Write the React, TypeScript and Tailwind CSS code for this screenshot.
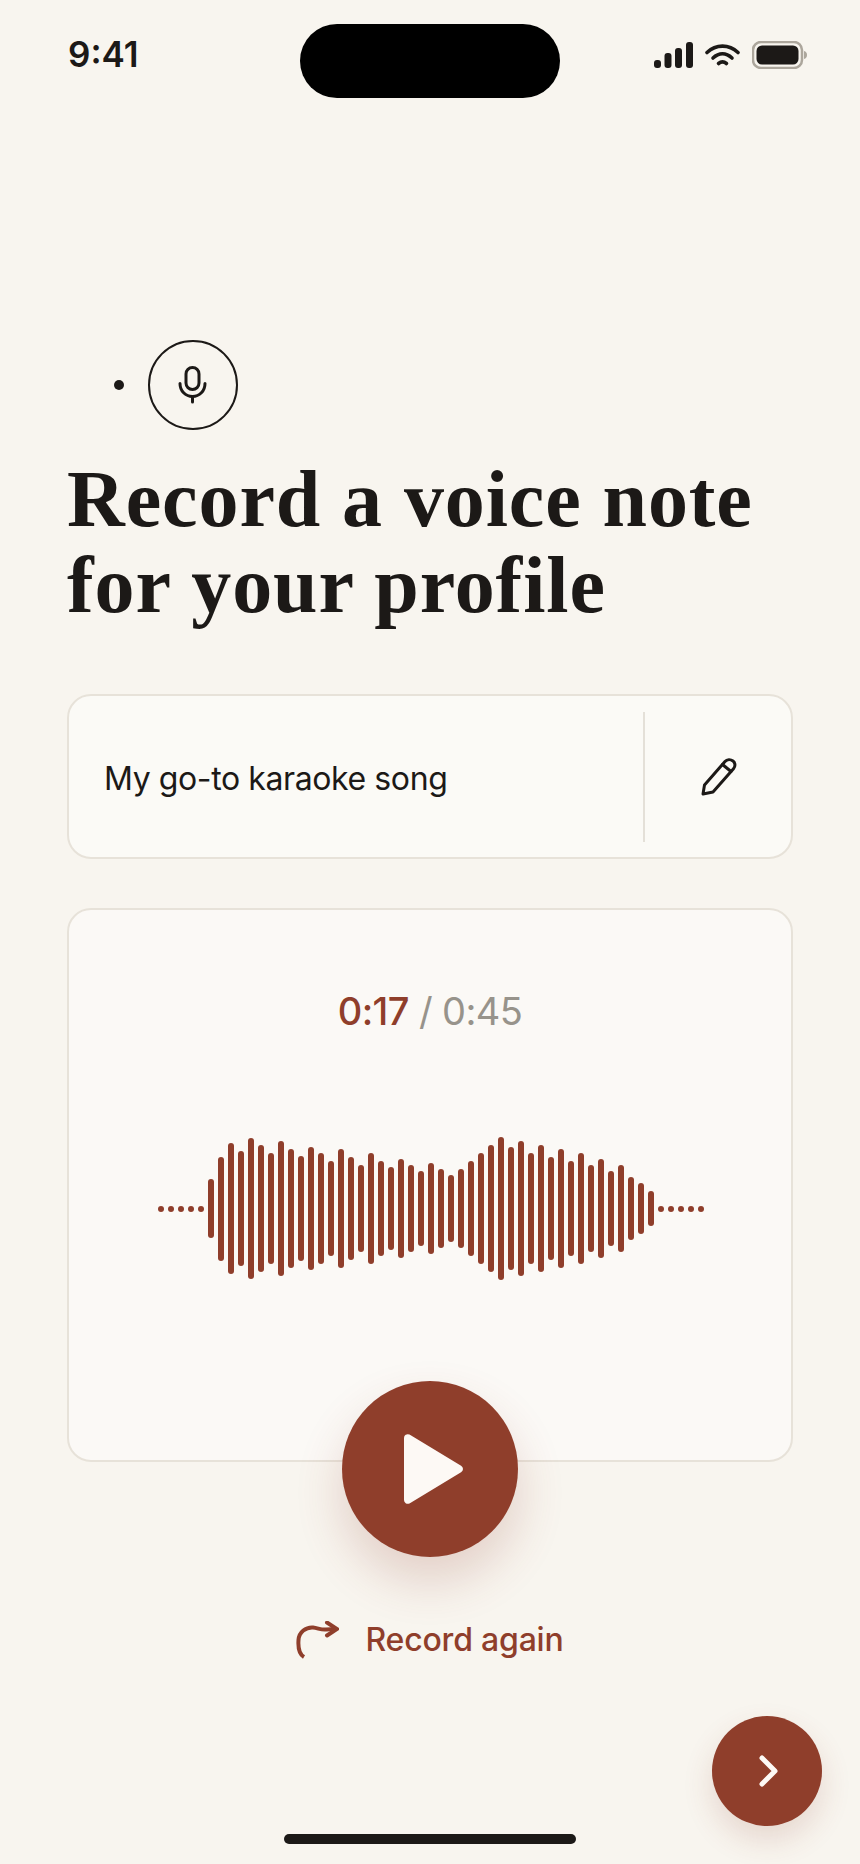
const left = [59,104,131,115,141,127,111,135,119,105,123,111,95,119,103,87,111,95,83,99,87,75,91,79,67,79,95,111,127,143,123,135,111,127,103,119,95,111,87,99,75,87,63,51,35];

function Dots() {
  return (
    <div className="flex gap-1">
      {[0, 1, 2, 3, 4].map((i) => (
        <span key={i} className="h-1.5 w-1.5 rounded-full bg-[#8f3e2b]" />
      ))}
    </div>
  );
}

export default function App() {
  return (
    <div className="relative flex h-[1864px] w-[860px] flex-col overflow-hidden bg-[#f8f5ef] font-['Inter',sans-serif] text-[#1c1917]">
      <header className="grid grid-cols-[300px_260px_1fr] pt-6">
        <div className="pl-[68px] pt-[7px] text-[35px] font-semibold leading-[46px]">9:41</div>
        <div className="h-[74px] rounded-[37px] bg-black" />
        <div className="flex items-start gap-[12px] pl-[94px] pt-4">
          <svg width="39" height="28" viewBox="0 0 39 28" fill="#1c1917" className="mt-[2px]">
            <rect x="0" y="18" width="7" height="8" rx="3" />
            <rect x="10.5" y="11" width="7" height="15" rx="3" />
            <rect x="21" y="6" width="7" height="20" rx="3" />
            <rect x="32" y="0" width="7" height="26" rx="3" />
          </svg>
          <svg width="35" height="24" viewBox="0 0 35 24" fill="none" stroke="#1c1917" strokeWidth="3.6" strokeLinecap="round" className="mt-[3px]">
            <path d="M2 9.5C11 1 24 1 33 9.5" />
            <path d="M8 15C14 9.5 21 9.5 27 15" />
            <path d="M13.5 20.5C16 18.5 19 18.5 21.5 20.5" />
          </svg>
          <svg width="55" height="28" viewBox="0 0 55 28" fill="none" className="mt-[1px]">
            <rect x="1" y="1" width="49" height="26" rx="8" stroke="#aca69c" strokeWidth="2.5" />
            <rect x="4.5" y="4.5" width="42" height="19" rx="5.5" fill="#1c1917" />
            <path d="M52 10C54 10.5 55 12 55 14C55 16 54 17.5 52 18Z" fill="#aca69c" />
          </svg>
        </div>
      </header>

      <main className="flex flex-1 flex-col px-[67px] pt-[242px]">
        <div className="flex items-center gap-6 pl-[47px]">
          <span className="h-2.5 w-2.5 rounded-full bg-[#1c1917]" />
          <div className="flex h-[90px] w-[90px] items-center justify-center rounded-full border-2 border-[#1c1917]">
            <svg width="30" height="38" viewBox="0 0 30 38" fill="none" stroke="#1c1917" strokeWidth="3" strokeLinecap="round">
              <rect x="8" y="1.5" width="13" height="22" rx="6.5" />
              <path d="M2 17.5C2 25 7.500 30.500 14.500 30.500C21.500 30.500 27 25 27 17.500" />
              <path d="M14.500 31V36" />
            </svg>
          </div>
        </div>

        <h1 className="mt-[26px] font-['Liberation_Serif',serif] text-[80px] font-bold leading-[86px] tracking-[0.9px] text-[#1c1917]">
          Record a voice note
          <br />
          for your profile
        </h1>

        <section className="mt-[66px] flex h-[165px] items-center rounded-[24px] border-2 border-[#e7e2d9] bg-[#fbfaf6] pl-[35px] pr-0">
          <span className="flex-1 pt-1 text-[32px] leading-10 tracking-[-0.4px]">My go-to karaoke song</span>
          <div className="flex h-[130px] w-[148px] items-center justify-center border-l-2 border-[#e4e0d8]">
            <svg width="36" height="38" viewBox="0 0 36 38" fill="none" stroke="#1c1917" strokeWidth="3" strokeLinejoin="round" strokeLinecap="round" className="mr-[-1px]">
              <path d="M2 36L3.500 27L24 3.500C26 1.200 29.500 1 32 3C34.500 5 34.500 8.500 32.500 10.800L12 34L2 36Z" />
              <path d="M21.500 6.500L30 13.500" />
            </svg>
          </div>
        </section>

        <section className="mt-[49px] flex h-[554px] flex-col items-center rounded-[24px] border-2 border-[#e7e2d9] bg-[#fbf9f6] pt-[76px]">
          <div className="text-[38px] leading-[50px] tracking-[-0.6px]">
            <span className="font-medium text-[#8f3e2b]">0:17</span>
            <span className="text-[#97938b]"> / 0:45</span>
          </div>
          <div className="ml-[2px] mt-[101px] flex items-center gap-1">
            <Dots />
            {left.map((h, i) => (
              <span key={i} className="w-1.5 rounded-full bg-[#8f3e2b]" style={{ height: h }} />
            ))}
            <Dots />
          </div>
        </section>

        <div className="relative z-10 -mt-[81px] flex justify-center">
          <button className="flex h-[176px] w-[176px] items-center justify-center rounded-full bg-[#8f3e2b] shadow-[0_24px_48px_rgba(143,62,43,0.2)]">
            <svg width="62" height="72" viewBox="0 0 62 72" className="ml-[6px]">
              <path d="M3 5L3 67C3 69 5 70.500 7 69.500L58.500 38.500C60.500 37 60.500 35 58.500 33.500L7 2.500C5 1.500 3 3 3 5Z" fill="#fdf9f5" stroke="#fdf9f5" strokeWidth="2" />
            </svg>
          </button>
        </div>

        <div className="mt-[63px] flex items-center justify-center gap-[26px] text-[#8f3e2b]">
          <svg width="43" height="38" viewBox="0 0 43 38" fill="none" stroke="#8f3e2b" strokeWidth="4">
            <path d="M8 36C3 33 2 26 2.500 19C3 11 10 6 17 6.500C22 7 25 9 30 8.500L40 8" />
            <path d="M31 1.500L41 8L31 14.500" strokeLinecap="round" />
          </svg>
          <span className="text-[32px] font-medium leading-10 tracking-[-0.2px]">Record again</span>
        </div>
      </main>

      <button className="absolute left-[712px] top-[1716px] flex h-[110px] w-[110px] items-center justify-center rounded-full bg-[#8f3e2b] shadow-[0_14px_30px_rgba(143,62,43,0.16)]">
        <svg width="22" height="34" viewBox="0 0 22 34" fill="none" stroke="#fdf9f5" strokeWidth="5" strokeLinecap="round" strokeLinejoin="round" className="ml-[3px]">
          <path d="M4 4L17 17L4 30" />
        </svg>
      </button>

      <div className="mx-auto mb-5 h-2.5 w-[292px] rounded-full bg-[#1c1917]" />
    </div>
  );
}
